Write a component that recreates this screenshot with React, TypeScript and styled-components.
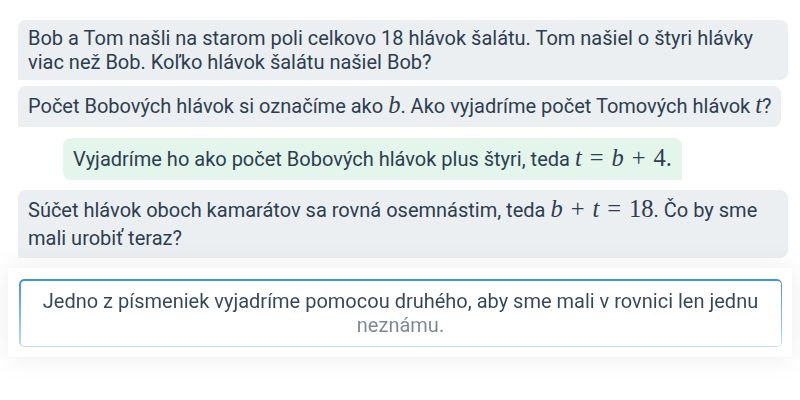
import React from "react";
import styled, { createGlobalStyle } from "styled-components";

const Global = createGlobalStyle`
  html, body { margin: 0; padding: 0; background: #ffffff; }
  body { width: 800px; height: 400px; overflow: hidden; font-family: Roboto, "Noto Sans", sans-serif; }
`;

const Page = styled.div`
  display: flex;
  flex-direction: column;
  width: 800px;
  height: 400px;
  background: #fff;
`;

const Chat = styled.div`
  display: flex;
  flex-direction: column;
  align-items: flex-start;
  padding: 20px 12px 0 18px;
`;

const Bubble = styled.div<{ $user?: boolean; $lh?: number; $mt?: number }>`
  box-sizing: border-box;
  max-width: 100%;
  margin-top: ${(p) => p.$mt ?? 0}px;
  margin-left: ${(p) => (p.$user ? 45 : 0)}px;
  padding: 6px 10px;
  font-size: 20px;
  line-height: ${(p) => p.$lh ?? 24}px;
  color: #2c3e50;
  background: ${(p) => (p.$user ? "#e4f5ec" : "#eceff1")};
  border-radius: ${(p) => (p.$user ? "8px 8px 0 8px" : "8px 8px 8px 0")};
`;

const M = styled.span`
  font-family: "Liberation Serif", "DejaVu Serif", serif;
  font-size: 24.5px;
  line-height: 1;
`;

const V = styled.i`
  font-family: "Liberation Serif", "DejaVu Serif", serif;
  font-style: italic;
`;

const Op = styled.span`
  display: inline-block;
  margin: 0 8px;
`;

const Dock = styled.div`
  margin: 10px 8px 0 8px;
  padding: 11px 10px 10px 11px;
  background: #fff;
  box-shadow: 0 0 28px rgba(0, 0, 0, 0.08);
`;

const Hint = styled.div`
  position: relative;
  box-sizing: border-box;
  padding: 10px 20px;
  border-radius: 5px;
  background: #fff;
  text-align: center;
  font-size: 20px;
  line-height: 24px;
  &::before {
    content: "";
    position: absolute;
    inset: 0;
    border-radius: 5px;
    padding: 1.5px;
    background: linear-gradient(180deg, #3a96dd 0%, #b9def5 100%);
    -webkit-mask: linear-gradient(#000 0 0) content-box, linear-gradient(#000 0 0);
    -webkit-mask-composite: xor;
    mask-composite: exclude;
  }
`;

const HintText = styled.div`
  position: relative;
  background: linear-gradient(180deg, #34465a 0%, #34465a 50%, #7b8794 50%, #7b8794 100%);
  -webkit-background-clip: text;
  background-clip: text;
  color: transparent;
`;

export default function App() {
  return (
    <Page>
      <Global />
      <Chat>
        <Bubble>
          Bob a Tom našli na starom poli celkovo 18 hlávok šalátu. Tom našiel o štyri hlávky viac než Bob. Koľko hlávok
          šalátu našiel Bob?
        </Bubble>
        <Bubble $mt={6} $lh={29}>
          Počet Bobových hlávok si označíme ako{" "}
          <M>
            <V>b</V>
          </M>
          . Ako vyjadríme počet Tomových hlávok{" "}
          <M>
            <V>t</V>
          </M>
          ?
        </Bubble>
        <Bubble $user $mt={11} $lh={30}>
          Vyjadríme ho ako počet Bobových hlávok plus štyri, teda{" "}
          <M>
            <V>t</V>
            <Op>=</Op>
            <V>b</V>
            <Op>+</Op>4.
          </M>
        </Bubble>
        <Bubble $mt={10} $lh={28}>
          Súčet hlávok oboch kamarátov sa rovná osemnástim, teda{" "}
          <M>
            <V>b</V>
            <Op>+</Op>
            <V>t</V>
            <Op>=</Op>18
          </M>
          . Čo by sme mali urobiť teraz?
        </Bubble>
      </Chat>
      <Dock>
        <Hint>
          <HintText>
            Jedno z písmeniek vyjadríme pomocou druhého, aby sme mali v rovnici len jednu neznámu.
          </HintText>
        </Hint>
      </Dock>
    </Page>
  );
}
